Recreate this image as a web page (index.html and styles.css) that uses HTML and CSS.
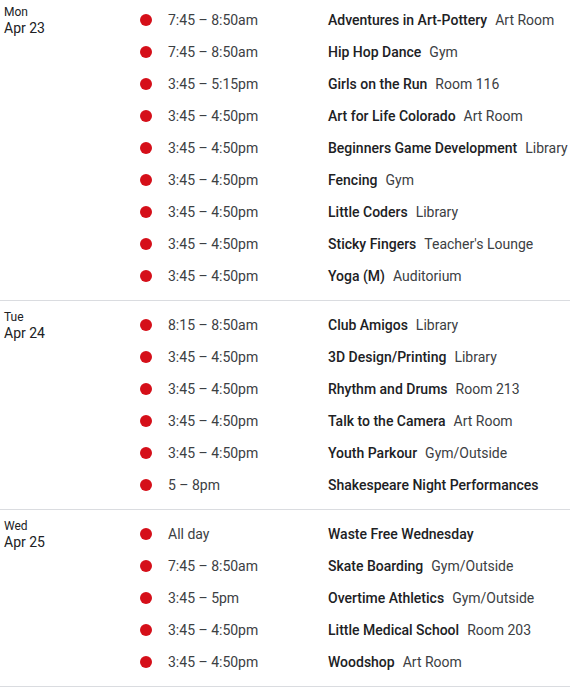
FILE: index.html
```html
<!DOCTYPE html>
<html>
<head>
<meta charset="utf-8">
<link rel="stylesheet" href="styles.css">
</head>
<body>
<div class="agenda">
  <section class="day day-first">
    <div class="date"><div class="dow">Mon</div><div class="dnum">Apr 23</div></div>
    <div class="events">
      <div class="ev"><span class="dot"></span><span class="time">7:45 – 8:50am</span><span class="title">Adventures in Art-Pottery</span><span class="loc">Art Room</span></div>
      <div class="ev"><span class="dot"></span><span class="time">7:45 – 8:50am</span><span class="title">Hip Hop Dance</span><span class="loc">Gym</span></div>
      <div class="ev"><span class="dot"></span><span class="time">3:45 – 5:15pm</span><span class="title">Girls on the Run</span><span class="loc">Room 116</span></div>
      <div class="ev"><span class="dot"></span><span class="time">3:45 – 4:50pm</span><span class="title">Art for Life Colorado</span><span class="loc">Art Room</span></div>
      <div class="ev"><span class="dot"></span><span class="time">3:45 – 4:50pm</span><span class="title">Beginners Game Development</span><span class="loc">Library</span></div>
      <div class="ev"><span class="dot"></span><span class="time">3:45 – 4:50pm</span><span class="title">Fencing</span><span class="loc">Gym</span></div>
      <div class="ev"><span class="dot"></span><span class="time">3:45 – 4:50pm</span><span class="title">Little Coders</span><span class="loc">Library</span></div>
      <div class="ev"><span class="dot"></span><span class="time">3:45 – 4:50pm</span><span class="title">Sticky Fingers</span><span class="loc">Teacher's Lounge</span></div>
      <div class="ev"><span class="dot"></span><span class="time">3:45 – 4:50pm</span><span class="title">Yoga (M)</span><span class="loc">Auditorium</span></div>
    </div>
  </section>
  <section class="day">
    <div class="date"><div class="dow">Tue</div><div class="dnum">Apr 24</div></div>
    <div class="events">
      <div class="ev"><span class="dot"></span><span class="time">8:15 – 8:50am</span><span class="title">Club Amigos</span><span class="loc">Library</span></div>
      <div class="ev"><span class="dot"></span><span class="time">3:45 – 4:50pm</span><span class="title">3D Design/Printing</span><span class="loc">Library</span></div>
      <div class="ev"><span class="dot"></span><span class="time">3:45 – 4:50pm</span><span class="title">Rhythm and Drums</span><span class="loc">Room 213</span></div>
      <div class="ev"><span class="dot"></span><span class="time">3:45 – 4:50pm</span><span class="title">Talk to the Camera</span><span class="loc">Art Room</span></div>
      <div class="ev"><span class="dot"></span><span class="time">3:45 – 4:50pm</span><span class="title">Youth Parkour</span><span class="loc">Gym/Outside</span></div>
      <div class="ev"><span class="dot"></span><span class="time">5 – 8pm</span><span class="title">Shakespeare Night Performances</span></div>
    </div>
  </section>
  <section class="day">
    <div class="date"><div class="dow">Wed</div><div class="dnum">Apr 25</div></div>
    <div class="events">
      <div class="ev"><span class="dot"></span><span class="time">All day</span><span class="title">Waste Free Wednesday</span></div>
      <div class="ev"><span class="dot"></span><span class="time">7:45 – 8:50am</span><span class="title">Skate Boarding</span><span class="loc">Gym/Outside</span></div>
      <div class="ev"><span class="dot"></span><span class="time">3:45 – 5pm</span><span class="title">Overtime Athletics</span><span class="loc">Gym/Outside</span></div>
      <div class="ev"><span class="dot"></span><span class="time">3:45 – 4:50pm</span><span class="title">Little Medical School</span><span class="loc">Room 203</span></div>
      <div class="ev"><span class="dot"></span><span class="time">3:45 – 4:50pm</span><span class="title">Woodshop</span><span class="loc">Art Room</span></div>
    </div>
  </section>
</div>
</body>
</html>
```
FILE: styles.css
```css
html, body {
  margin: 0;
  padding: 0;
  background: #fff;
}
body {
  font-family: Roboto, "Liberation Sans", Arial, sans-serif;
  color: #202124;
  width: 570px;
  overflow: hidden;
}
.day {
  display: flex;
  padding: 8px 0 8px 0;
  border-bottom: 1px solid #dadce0;
}
.day-first {
  padding-top: 4px;
}
.date {
  width: 140px;
  flex: none;
  padding-left: 4px;
  box-sizing: border-box;
  color: #202124;
}
.dow {
  font-size: 12px;
  line-height: 16px;
}
.dnum {
  font-size: 14px;
  line-height: 16px;
}
.events {
  display: flex;
  flex-direction: column;
  flex: 1;
  min-width: 0;
}
.ev {
  display: flex;
  align-items: center;
  height: 32px;
  font-size: 14px;
  white-space: nowrap;
}
.dot {
  width: 12px;
  height: 12px;
  border-radius: 50%;
  background: #d50f19;
  flex: none;
  margin-right: 16px;
}
.time {
  width: 160px;
  flex: none;
  color: #3c4043;
}
.title {
  font-weight: 500;
  color: #202124;
  margin-right: 8px;
}
.loc {
  color: #3c4043;
}
```
